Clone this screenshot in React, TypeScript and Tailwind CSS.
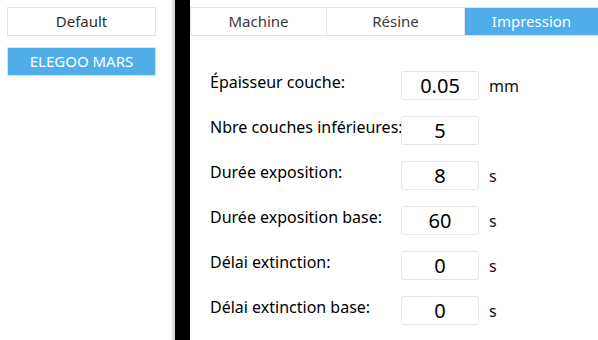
const rows = [
  { label: 'Épaisseur couche:', value: '0.05', unit: 'mm' },
  { label: 'Nbre couches inférieures:', value: '5', unit: '' },
  { label: 'Durée exposition:', value: '8', unit: 's' },
  { label: 'Durée exposition base:', value: '60', unit: 's' },
  { label: 'Délai extinction:', value: '0', unit: 's' },
  { label: 'Délai extinction base:', value: '0', unit: 's' },
];

const tabs = ['Machine', 'Résine', 'Impression'];

const App = () => {
  return (
    <div className="flex h-[340px] w-[598px] overflow-hidden bg-white font-['Noto_Sans',sans-serif]">
      {/* profils */}
      <div className="flex w-[172px] flex-col gap-[11px] bg-white px-[7px] pt-[7px]">
        <div className="flex h-[29px] w-[149px] items-center justify-center border border-[#e2e2e8] text-[15px] text-[#2e2e2e]">
          Default
        </div>
        <div className="flex h-[29px] w-[149px] items-center justify-center border border-[#e2e2e8] bg-[#4faeea] text-[15px] text-white">
          ELEGOO MARS
        </div>
      </div>
      <div className="w-[3px] bg-[#dcdce2]" />
      <div className="w-[15px] bg-black" />

      {/* réglages */}
      <div className="flex flex-1 flex-col pt-[7px]">
        <div className="grid h-[29px] grid-cols-[136px_138px_1fr] border-y border-l border-[#e2e2e8]">
          {tabs.map((tab, i) => (
            <div
              key={tab}
              className={
                i === 2
                  ? 'flex items-center justify-center bg-[#4faeea] text-[15px] text-white'
                  : 'flex items-center justify-center border-r border-[#e2e2e8] text-[15px] text-[#3a3a3a]'
              }
            >
              {tab}
            </div>
          ))}
        </div>

        <div className="mt-[35px] flex flex-col gap-[16px] pl-[20px]">
          {rows.map((row) => (
            <div key={row.label} className="flex h-[29px] items-start">
              <div className="mt-[1px] w-[191px] whitespace-nowrap text-[16px] leading-[20px] text-black">
                {row.label}
              </div>
              <div className="flex h-[29px] w-[78px] shrink-0 items-center justify-center rounded-[3px] border border-[#e6e6e6] bg-white text-[20px] leading-[29px] text-black">
                {row.value}
              </div>
              <div className="ml-[10px] mt-[1px] text-[16px] leading-[29px] text-[#111]">{row.unit}</div>
            </div>
          ))}
        </div>
      </div>
    </div>
  );
};

export default App;
